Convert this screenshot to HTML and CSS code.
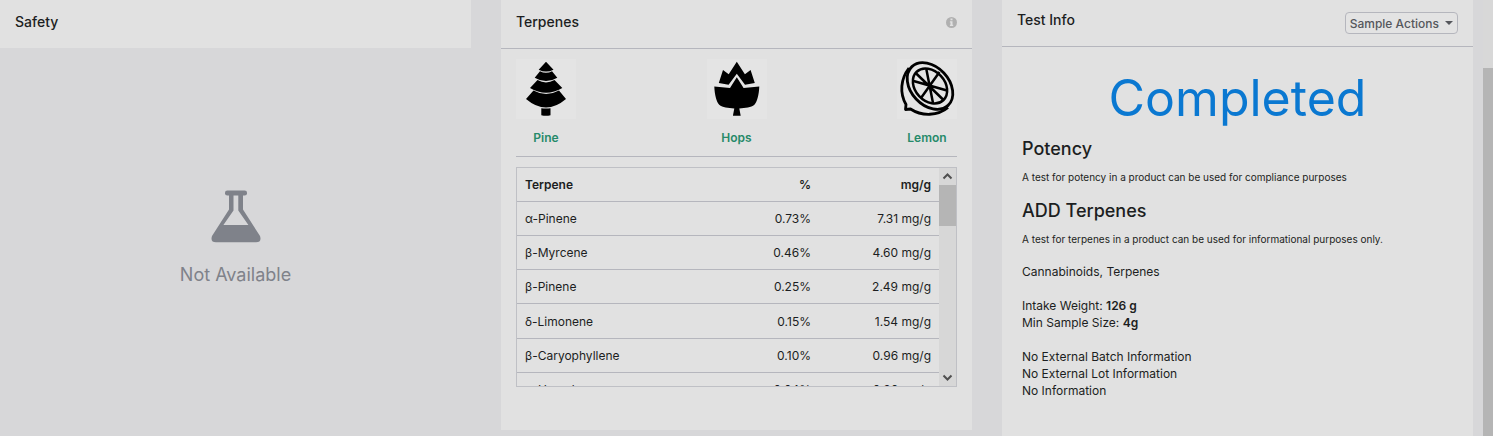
FILE: index.html
```html
<!DOCTYPE html>
<html lang="en">
<head>
<meta charset="utf-8">
<meta name="viewport" content="width=device-width, initial-scale=1">
<title>Test Results</title>
<link rel="stylesheet" href="styles.css">
</head>
<body>
<div class="page">
  <main class="columns">
    <section class="safety">
      <header class="card-header card-header-plain"><h2 class="card-title">Safety</h2></header>
      <div class="empty">
        <svg class="flask" viewBox="0 0 50 53" aria-hidden="true">
          <rect x="14" y="0.5" width="22" height="5" rx="2.3"/>
          <path fill-rule="evenodd" d="M18 3H32V19.500L49 46Q51 52.300 45 52.300H5Q-1 52.300 1 46L18 19.500ZM22.500 5V20.500L12.400 35H37.400L27.300 20.500V5Z"/>
        </svg>
        <p class="empty-text">Not Available</p>
      </div>
    </section>

    <section class="card">
      <header class="card-header">
        <h2 class="card-title">Terpenes</h2>
        <button class="info" type="button" aria-label="About terpenes">
          <svg viewBox="0 0 12 12" aria-hidden="true"><circle cx="6.500" cy="6.500" r="5.500" fill="#b0b0b0"/><path d="M5.500 2.500h2v1.700h-2zM4.900 5.200H7.500v3.600h.7v1.300H4.900V8.800H5.500V6.500h-.6z" fill="#e1e1e1"/></svg>
        </button>
      </header>
      <div class="card-body">
        <ul class="flavors">
          <li class="flavor">
            <svg class="tile" viewBox="0 0 60 60" aria-hidden="true">
              <path d="M30 2.700L37.500 10.700Q30 14.500 22.700 10.700ZM24 12.300Q30 15.300 36 12.300L41.300 18.700Q30 25.500 18.700 18.700ZM21.500 21Q30 25.800 38.500 21L46.300 29Q30 38.500 14 29ZM17.500 31.500Q30 38.500 43 31.500L50 40Q30 57 10 40Z"/>
              <path d="M25.300 49.200Q30 50 34.500 49.200V56.200Q30 57.200 25.300 56.200Z"/>
            </svg>
            <span>Pine</span>
          </li>
          <li class="flavor">
            <svg class="tile" viewBox="0 0 60 60" aria-hidden="true">
              <path d="M11.800 24L16 11L21.700 15.300L29.800 2.700L37.900 15.300L43.600 11L47.800 24L38 25.800L29.800 14.800L21.600 25.800Z"/>
              <path d="M29.800 18.200L36.600 29L52.300 27.500C52 36 50 43 47.400 45.700C44 48.500 38.500 49 32.300 49.400L33.700 56.700H25.900L27.300 49.400C21 49 15.600 48.500 12.200 45.700C9.600 43 7.600 36 7.300 27.500L23 29Z"/>
            </svg>
            <span>Hops</span>
          </li>
          <li class="flavor">
            <svg class="tile" viewBox="0 0 60 60" fill="none" stroke="#000" aria-hidden="true">
              <g transform="rotate(47 33 27)"><ellipse cx="33" cy="27" rx="26.500" ry="19" stroke-width="2.800"/><ellipse cx="33" cy="27" rx="19.500" ry="14.800" stroke-width="2.500"/></g>
              <path stroke-width="2.500" d="M29.300 10L36 44M42.500 13L24 39M16.500 22L50 31.500M18.700 14L46.500 41"/>
              <path stroke-width="2.800" stroke-linejoin="round" d="M12 9C3.500 20 2.500 34 9 45.500L8.500 50.500L13.500 50C25 57.500 41 57 51 48.500"/>
            </svg>
            <span>Lemon</span>
          </li>
        </ul>
        <div class="table-frame">
          <div class="table-view">
            <table class="terpenes">
              <colgroup><col><col class="col-percent"><col class="col-amount"></colgroup>
              <thead><tr><th scope="col">Terpene</th><th scope="col">%</th><th scope="col">mg/g</th></tr></thead>
              <tbody>
                <tr><td>α-Pinene</td><td>0.73%</td><td>7.31 mg/g</td></tr>
                <tr><td>β-Myrcene</td><td>0.46%</td><td>4.60 mg/g</td></tr>
                <tr><td>β-Pinene</td><td>0.25%</td><td>2.49 mg/g</td></tr>
                <tr><td>δ-Limonene</td><td>0.15%</td><td>1.54 mg/g</td></tr>
                <tr><td>β-Caryophyllene</td><td>0.10%</td><td>0.96 mg/g</td></tr>
                <tr><td>α-Humulene</td><td>0.04%</td><td>0.36 mg/g</td></tr>
              </tbody>
            </table>
          </div>
          <div class="scroller" aria-hidden="true">
            <svg class="arrow" viewBox="0 0 17 17"><path d="M4.500 10.500L8.500 6.500L12.500 10.500"/></svg>
            <div class="thumb"></div>
            <svg class="arrow arrow-down" viewBox="0 0 17 17"><path d="M4.500 6.500L8.500 10.500L12.500 6.500"/></svg>
          </div>
        </div>
      </div>
    </section>

    <section class="card card-tall">
      <header class="card-header card-header-short">
        <h2 class="card-title">Test Info</h2>
        <button class="actions" type="button">Sample Actions<span class="caret"></span></button>
      </header>
      <div class="test-body">
        <p class="status">Completed</p>
        <h3 class="test-name">Potency</h3>
        <p class="test-note">A test for potency in a product can be used for compliance purposes</p>
        <h3 class="test-name">ADD Terpenes</h3>
        <p class="test-note">A test for terpenes in a product can be used for informational purposes only.</p>
        <p class="detail">Cannabinoids, Terpenes</p>
        <p class="detail">Intake Weight: <b>126 g</b><br>Min Sample Size: <b>4g</b></p>
        <p class="detail">No External Batch Information<br>No External Lot Information<br>No Information</p>
      </div>
    </section>
  </main>
  <div class="page-track" aria-hidden="true"><div class="page-thumb"></div></div>
</div>
</body>
</html>
```
FILE: styles.css
```css
* { box-sizing: border-box; }

body {
  margin: 0;
  background: #d7d7d9;
  color: #1c1e21;
  font: 400 12px/17px Inter, "Liberation Sans", sans-serif;
}

h2, h3, p, ul { margin: 0; padding: 0; }
b { font-weight: 600; }

.page {
  display: flex;
  gap: 10px;
  height: 100vh;
  overflow: hidden;
}

.columns {
  flex: 1;
  display: grid;
  grid-template-columns: repeat(3, minmax(0, 1fr));
  gap: 30px;
  align-items: start;
}

.card { background: #e1e1e1; }
.card-tall { min-height: 100vh; }

.card-header {
  display: flex;
  align-items: center;
  justify-content: space-between;
  padding: 12px 15px 16px;
  border-bottom: 1px solid #b5b6bd;
  background: #e1e1e1;
}
.card-header-plain { border-bottom: 0; }
.card-header-short { padding: 12px 15px; align-items: flex-start; }

.card-title {
  font-size: 14px;
  font-weight: 500;
  line-height: 20px;
}
.card-header-short .card-title { margin-top: -2px; }

/* Empty state */
.empty {
  display: flex;
  flex-direction: column;
  align-items: center;
  gap: 20px;
  padding-top: 142px;
  color: #7f828a;
}
.flask { width: 50px; height: 53px; fill: currentColor; }
.empty-text { font-size: 18px; line-height: 24px; }

.info {
  display: flex;
  padding: 0;
  border: 0;
  background: none;
}
.info svg { width: 12px; height: 12px; overflow: visible; }

/* Terpenes */
.card-body { padding: 10px 15px 43px; }

.flavors {
  display: flex;
  justify-content: space-between;
  padding-bottom: 10px;
  border-bottom: 1px solid #b5b6bd;
  list-style: none;
}
.flavor {
  display: flex;
  flex-direction: column;
  align-items: center;
  gap: 10px;
  color: #268a69;
  font-weight: 600;
}
.tile { width: 60px; height: 60px; background: #e4e4e4; }

.table-frame {
  display: flex;
  height: 220px;
  margin-top: 10px;
  border: 1px solid #bfc0c5;
}
.table-view { flex: 1; overflow: hidden; }

.terpenes {
  width: 100%;
  height: 239px;
  border-collapse: collapse;
  table-layout: fixed;
}
.col-percent { width: 28%; }
.col-amount { width: 120px; }
.terpenes th, .terpenes td {
  padding: 8px;
  border-bottom: 1px solid #b5b6bd;
  font-weight: 400;
  text-align: right;
}
.terpenes th { font-weight: 600; }
.terpenes th:first-child, .terpenes td:first-child { text-align: left; }

.scroller {
  display: flex;
  flex-direction: column;
  width: 17px;
  background: #d7d7d7;
}
.arrow {
  width: 17px;
  height: 17px;
  fill: none;
  stroke: #505050;
  stroke-width: 2;
}
.arrow-down { margin-top: auto; }
.thumb { height: 41px; background: #b5b5b5; }

/* Test info */
.actions {
  display: flex;
  align-items: center;
  gap: 6px;
  height: 22px;
  padding: 0 4px;
  border: 1px solid #b5b6bd;
  border-radius: 4px;
  background: #e3e3e3;
  color: #55575c;
  font: 500 12px/17px Inter, "Liberation Sans", sans-serif;
}
.caret {
  border: 4px solid transparent;
  border-top-color: currentColor;
  border-bottom: 0;
}

.test-body { padding: 21px 20px; }
.status {
  margin-bottom: 11px;
  color: #0a78d1;
  font-size: 50px;
  line-height: 60px;
  text-align: center;
}
.test-name {
  font-size: 18px;
  font-weight: 500;
  line-height: 20px;
}
.test-note {
  margin: 11px 0 16px;
  font-size: 10px;
  line-height: 15px;
}
.detail { margin-bottom: 17px; }

/* Page scrollbar */
.page-track { width: 10px; background: #d8d8d8; }
.page-thumb { height: 100%; margin-top: 68px; background: #b5b5b5; }
```
